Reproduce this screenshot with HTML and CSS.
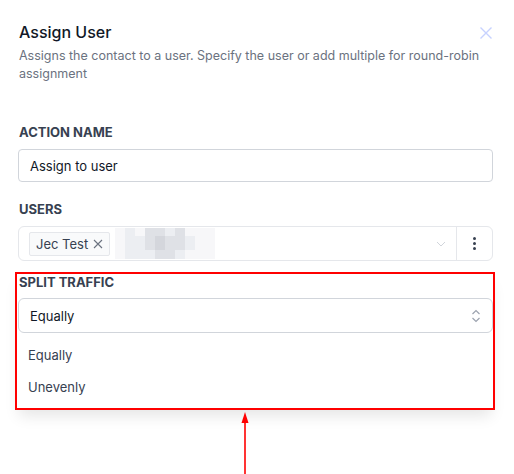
FILE: index.html
```html
<!DOCTYPE html>
<html lang="en">
<head>
    <meta charset="UTF-8">
    <title>Assign User</title>
    <link rel="stylesheet" href="styles.css">
</head>
<body>
    <div class="panel">
        <div class="header">
            <h2>Assign User</h2>
            <svg class="close" width="14" height="14" viewBox="0 0 14 14"><path d="M1.5 1.5l11 11M12.5 1.5l-11 11" stroke="#c7d2fe" stroke-width="1.4" fill="none"/></svg>
        </div>
        <p class="desc">Assigns the contact to a user. Specify the user or add multiple for round-robin assignment</p>

        <div class="field">
            <label>ACTION NAME</label>
            <div class="input">Assign to user</div>
        </div>

        <div class="field">
            <label>USERS</label>
            <div class="multi">
                <div class="multi-main">
                    <span class="chip">Jec Test
                        <svg width="10" height="10" viewBox="0 0 10 10"><path d="M1 1l8 8M9 1l-8 8" stroke="#6b7280" stroke-width="1.1" fill="none"/></svg>
                    </span>
                    <div class="blur">
                        <i class="b0"></i><i class="b1"></i><i class="b0"></i><i class="b2"></i><i class="b2"></i><i class="b1"></i><i class="b2"></i><i class="b0"></i><i class="b0"></i><i class="b0"></i>
                        <i class="b0"></i><i class="b1"></i><i class="b1"></i><i class="b2"></i><i class="b3"></i><i class="b2"></i><i class="b2"></i><i class="b1"></i><i class="b0"></i><i class="b0"></i>
                        <i class="b0"></i><i class="b1"></i><i class="b1"></i><i class="b1"></i><i class="b2"></i><i class="b2"></i><i class="b1"></i><i class="b0"></i><i class="b0"></i><i class="b0"></i>
                    </div>
                    <svg class="chev" width="10" height="6" viewBox="0 0 10 6"><path d="M1 1l4 4 4-4" stroke="#d1d5db" stroke-width="1" fill="none"/></svg>
                </div>
                <div class="kebab"><i></i><i></i><i></i></div>
            </div>
        </div>

        <div class="highlight">
            <div class="field split">
                <label>SPLIT TRAFFIC</label>
                <div class="select">
                    <span>Equally</span>
                    <svg width="10" height="14" viewBox="0 0 10 14"><path d="M1.5 5l3.5-3.5 3.5 3.5M1.5 9l3.5 3.5 3.5-3.5" stroke="#9ca3af" stroke-width="1.2" fill="none"/></svg>
                </div>
                <ul class="options">
                    <li>Equally</li>
                    <li>Unevenly</li>
                </ul>
            </div>
        </div>

        <div class="arrow">
            <svg width="12" height="62" viewBox="0 0 12 62"><path d="M6 0l-3.5 11h7z" fill="#ff0000"/><path d="M6 9v53" stroke="#ff0000" stroke-width="1.6"/></svg>
        </div>
    </div>
</body>
</html>
```

FILE: styles.css
```css
body {
    margin: 0;
    background: #fff;
    font-family: Inter, 'Noto Sans', sans-serif;
    color: #111827;
}
.panel {
    padding: 20px 21px 0 18px;
}
.header {
    display: flex;
    justify-content: space-between;
    align-items: center;
    padding-left: 1px;
}
h2 {
    margin: 0;
    font-size: 16px;
    line-height: 24px;
    font-weight: 500;
    color: #111827;
}
.close {
    margin-top: 2px;
}
.desc {
    margin: 3px 0 0 1px;
    font-size: 12.5px;
    line-height: 18px;
    color: #6b7280;
}
.field {
    display: flex;
    flex-direction: column;
}
.field label {
    font-size: 13px;
    line-height: 16px;
    font-weight: 700;
    color: #374151;
    margin: 0 0 9px 1px;
}
.desc + .field {
    margin-top: 41px;
}
.field + .field {
    margin-top: 19px;
}
.input {
    height: 31px;
    border: 1px solid #d1d5db;
    border-radius: 4px;
    padding: 0 11px;
    display: flex;
    align-items: center;
    font-size: 13px;
    color: #111827;
}
.multi {
    display: flex;
    height: 33px;
    border: 1px solid #e5e7eb;
    border-radius: 6px;
}
.multi-main {
    flex: 1;
    display: flex;
    align-items: center;
    padding: 0 10px;
    gap: 5px;
    border-right: 1px solid #e5e7eb;
}
.chip {
    display: flex;
    align-items: center;
    gap: 5px;
    height: 22px;
    padding: 0 6px;
    border: 1px solid #e5e7eb;
    border-radius: 2px;
    background: #f9fafb;
    font-size: 13px;
    color: #374151;
}
.blur {
    display: grid;
    grid-template-columns: repeat(10, 10px);
    grid-template-rows: 8px 14px 9px;
}
.blur i { display: block; }
.b0 { background: #f7f7f9; }
.b1 { background: #eceef2; }
.b2 { background: #dfe1e6; }
.b3 { background: #d4d6dc; }
.chev {
    margin-left: auto;
}
.kebab {
    width: 35px;
    display: flex;
    flex-direction: column;
    align-items: center;
    justify-content: center;
    gap: 2px;
}
.kebab i {
    width: 3px;
    height: 3px;
    border-radius: 50%;
    background: #374151;
}
.highlight {
    margin: 11px -2px 0 -3px;
    border: 2px solid #ff0000;
    padding: 0 0 0 1px;
    box-shadow: 0 10px 14px -4px rgba(0, 0, 0, 0.10);
}
.split label {
    margin-bottom: 8px;
}
.select {
    height: 33px;
    border: 1px solid #d1d5db;
    border-radius: 6px;
    display: flex;
    align-items: center;
    justify-content: space-between;
    padding: 0 11px;
    font-size: 13px;
    color: #111827;
}
.options {
    list-style: none;
    margin: 0;
    padding: 6px 0 5px;
}
.options li {
    height: 32px;
    line-height: 32px;
    padding-left: 10px;
    font-size: 13px;
    color: #374151;
}
.arrow {
    display: flex;
    justify-content: center;
    padding-top: 2px;
    margin-left: -21px;
}
.arrow svg { display: block; }
```
